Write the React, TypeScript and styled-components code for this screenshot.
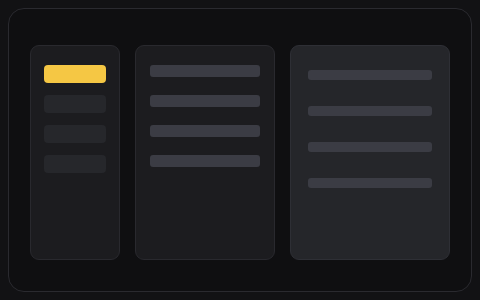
import React from 'react';
import styled, { createGlobalStyle } from 'styled-components';

const GlobalStyles = createGlobalStyle`
	html, body {
		margin: 0;
		padding: 0;
		background: #121214;
		font-family: "Inter", "Liberation Sans", sans-serif;
	}
`;

const Page = styled.div`
	width: 480px;
	height: 300px;
	padding: 8px;
	box-sizing: border-box;
`;

const Frame = styled.div`
	box-sizing: border-box;
	height: 100%;
	border: 1px solid #2a2a2f;
	border-radius: 16px;
	background: #0f0f11;
	padding: 36px 21px 31px 21px;
	display: flex;
	gap: 15px;
`;

const Panel = styled.div<{ $width: number; $tone?: 'dark' | 'light' }>`
	box-sizing: border-box;
	width: ${({ $width }) => $width}px;
	flex: none;
	border-radius: 9px;
	border: 1px solid ${({ $tone }) => ($tone === 'light' ? '#2e2f35' : '#29292e')};
	background: ${({ $tone }) => ($tone === 'light' ? '#25262a' : '#1c1c1f')};
	display: flex;
	flex-direction: column;
`;

const Sidebar = styled(Panel)`
	padding: 19px 13px;
	gap: 12px;
`;

const NavItem = styled.div<{ $active?: boolean }>`
	height: 18px;
	border-radius: 4px;
	background: ${({ $active }) => ($active ? '#f5c744' : '#26272b')};
`;

const List = styled(Panel)`
	padding: 19px 14px;
	gap: 18px;
`;

const Detail = styled(Panel)`
	padding: 24px 17px;
	gap: 26px;
`;

const Bar = styled.div<{ $height: number }>`
	height: ${({ $height }) => $height}px;
	border-radius: 3px;
	background: #3b3c44;
`;

export default function App(): JSX.Element {
	return (
		<>
			<GlobalStyles />
			<Page>
				<Frame>
					<Sidebar $width={90}>
						<NavItem $active />
						<NavItem />
						<NavItem />
						<NavItem />
					</Sidebar>
					<List $width={140}>
						<Bar $height={12} />
						<Bar $height={12} />
						<Bar $height={12} />
						<Bar $height={12} />
					</List>
					<Detail $width={160} $tone="light">
						<Bar $height={10} />
						<Bar $height={10} />
						<Bar $height={10} />
						<Bar $height={10} />
					</Detail>
				</Frame>
			</Page>
		</>
	);
}
